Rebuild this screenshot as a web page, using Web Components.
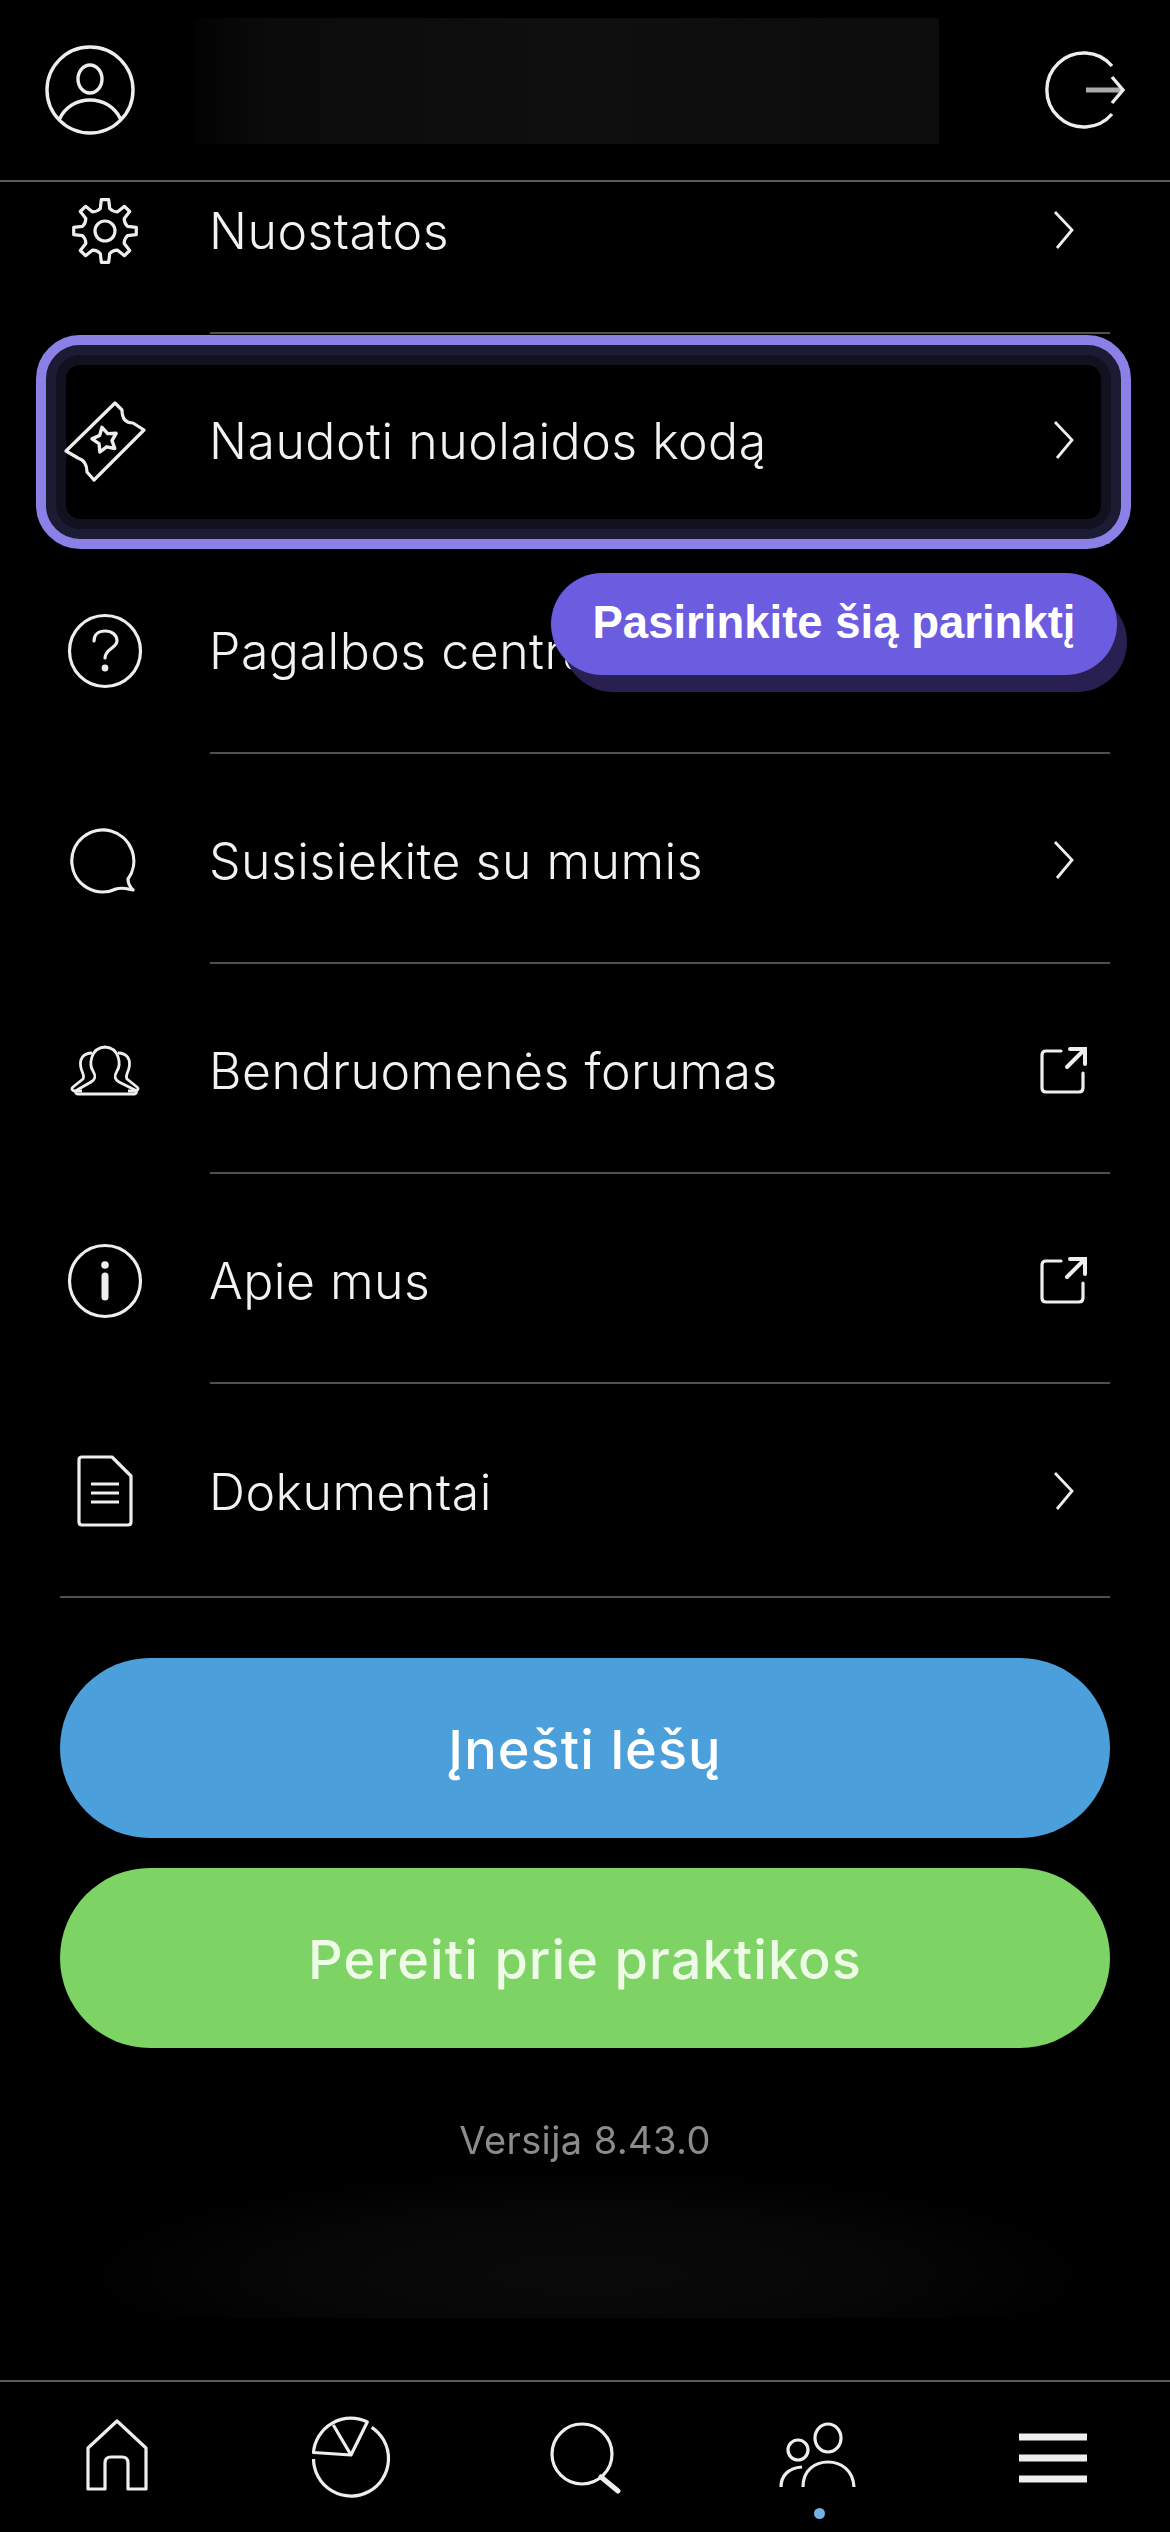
<!DOCTYPE html>
<html lang="lt">
<head>
<meta charset="utf-8">
<title>Meniu</title>
<style>
  html, body { margin: 0; background: #000; }
  body { width: 1170px; height: 2532px; overflow: hidden; font-family: Inter, "Liberation Sans", sans-serif; }
  app-screen { height: 2532px; }
</style>
</head>
<body>
<app-screen>
  <top-bar slot="top"></top-bar>
  <menu-row icon="gear">Nuostatos</menu-row>
  <menu-row icon="ticket" highlighted>Naudoti nuolaidos kodą</menu-row>
  <menu-row icon="help">Pagalbos centras</menu-row>
  <menu-row icon="chat">Susisiekite su mumis</menu-row>
  <menu-row icon="community" trailing="external">Bendruomenės forumas</menu-row>
  <menu-row icon="info" trailing="external">Apie mus</menu-row>
  <menu-row icon="doc" last>Dokumentai</menu-row>
  <hint-bubble slot="overlay">Pasirinkite šią parinktį</hint-bubble>
  <menu-footer slot="footer"></menu-footer>
  <bottom-nav slot="nav"></bottom-nav>
</app-screen>

<script>
// gear outline, teeth around a circle
function gearPath(cx, cy, outer, inner, teeth) {
  let d = "";
  const step = (Math.PI * 2) / teeth;
  for (let i = 0; i < teeth; i++) {
    const a = i * step - Math.PI / 2;
    const pt = (r, o) => {
      const x = cx + r * Math.cos(a + o * step);
      const y = cy + r * Math.sin(a + o * step);
      return x.toFixed(1) + " " + y.toFixed(1);
    };
    d += (i === 0 ? "M" : "L") + pt(inner, -0.26);
    d += "L" + pt(outer, -0.15) + "L" + pt(outer, 0.15) + "L" + pt(inner, 0.26);
    d += "Q" + pt(inner * 0.9, 0.5) + " " + pt(inner, 0.74);
  }
  return d + "Z";
}

function starPath(cx, cy, outer, inner, rot) {
  let d = "";
  for (let i = 0; i < 10; i++) {
    const r = i % 2 ? inner : outer;
    const a = rot + (i * Math.PI) / 5;
    d += (i ? "L" : "M") + (cx + r * Math.cos(a)).toFixed(1) + " " + (cy + r * Math.sin(a)).toFixed(1);
  }
  return d + "Z";
}

const ICONS = {
  gear: `<svg width="70" height="68" viewBox="0 0 70 68"><path d="${gearPath(35, 34, 31.5, 23, 8)}" stroke-linejoin="round"/><circle cx="35" cy="34" r="10"/></svg>`,
  ticket: `<svg width="82" height="82" viewBox="0 0 82 82"><path d="M51 3 L58 10 C58 19 62 23 69 23 L80 30 L30 80 L23 72 C23 64 20 60 14 58 L2 51 Z" stroke-linejoin="round"/><path d="${starPath(41, 40, 13, 7, -1.8)}" stroke-width="3.4" stroke-linejoin="round"/></svg>`,
  help: `<svg width="76" height="76" viewBox="0 0 76 76"><circle cx="38" cy="38" r="35.5"/><path d="M27 28 C27 21 32 18 38 18 C45 18 50 22 50 28 C50 35 38 36 38 45" stroke-linecap="round"/><circle class="fill" cx="38" cy="55" r="3.4"/></svg>`,
  chat: `<svg width="70" height="68" viewBox="0 0 70 68"><path d="M46 62 A31 31 0 1 1 58 52 C58 56 60 60 63 63 C58 62 52 60 46 62 Z" stroke-linejoin="round"/></svg>`,
  community: `<svg width="70" height="54" viewBox="0 0 70 54"><path d="M21 50 L64 50 C67 50 67 47 65 46 L49 38 C44 35 44 32 47 27 C51 21 50 4 35 3 C20 4 19 21 23 27 C26 32 26 35 21 38 L7 46 C5 47 5 50 8 50 L21 50" stroke-linejoin="round" stroke-width="2.8"/><path d="M22 9 C13 9 9 15 11 24 C12 29 15 31 13 35 L3 43 C1 45 2 47 6 47 L12 47 M48 9 C57 9 61 15 59 24 C58 29 55 31 57 35 L67 43 C69 45 68 47 64 47 L58 47" stroke-linejoin="round" stroke-width="2.8"/></svg>`,
  info: `<svg width="76" height="76" viewBox="0 0 76 76"><circle cx="38" cy="38" r="35.5"/><circle class="fill" cx="38" cy="22" r="3.8"/><path d="M38 33 L38 54" stroke-width="7" stroke-linecap="round"/></svg>`,
  doc: `<svg width="58" height="74" viewBox="0 0 58 74"><path d="M6 3 L36 3 L55 22 L55 68 Q55 71 52 71 L6 71 Q3 71 3 68 L3 6 Q3 3 6 3 Z" stroke-linejoin="round"/><path d="M15 30 L43 30 M15 39 L43 39 M15 48 L43 48"/></svg>`,
  chevron: `<svg width="24" height="40" viewBox="0 0 24 40"><path d="M3 2 L20 20 L5 38" stroke-width="2.8"/></svg>`,
  external: `<svg width="50" height="50" viewBox="0 0 50 50"><path d="M22 6 L7 6 Q3 6 3 10 L3 43 Q3 47 7 47 L40 47 Q44 47 44 43 L44 28" stroke-linecap="round"/><path d="M28 22 L46 4 M31 4 L46 4 L46 19" stroke-linecap="round" stroke-width="4"/></svg>`,
};

class AppScreen extends HTMLElement {
  constructor() {
    super();
    this.attachShadow({ mode: "open" });
    this.shadowRoot.innerHTML = `
      <style>
        :host { display: flex; flex-direction: column; width: 1170px; background: #000; overflow: hidden; }
        .top { position: relative; z-index: 2; background: #000; }
        /* the list is scrolled a little, first row runs under the header */
        .list { position: relative; z-index: 1; margin-top: -58px; display: flex; flex-direction: column; }
        .nav { margin-top: auto; }
      </style>
      <div class="top"><slot name="top"></slot></div>
      <div class="list"><slot></slot><slot name="overlay"></slot></div>
      <slot name="footer"></slot>
      <div class="nav"><slot name="nav"></slot></div>
    `;
  }
}

class TopBar extends HTMLElement {
  constructor() {
    super();
    this.attachShadow({ mode: "open" });
    this.shadowRoot.innerHTML = `
      <style>
        :host { display: flex; align-items: center; height: 180px; padding: 0 42px 0 45px; border-bottom: 2px solid #5a5a5a; }
        svg { fill: none; stroke: #eee; stroke-width: 3.4; display: block; flex: none; filter: blur(.5px); }
        .blurred {
          width: 744px; height: 126px; margin: -18px 0 0 60px; flex: none;
          background: linear-gradient(90deg, #030303, #0b0b0b 10%, #0f0f0f 50%, #0c0c0c 100%);
        }
        .logout { margin-left: auto; }
      </style>
      <svg width="90" height="90" viewBox="0 0 90 90">
        <circle cx="45" cy="45" r="43"/>
        <ellipse cx="45" cy="34" rx="12" ry="14"/>
        <path d="M14 75 C20 61 33 55 45 55 C57 55 70 61 76 75"/>
      </svg>
      <div class="blurred"></div>
      <svg class="logout" width="88" height="80" viewBox="0 0 88 80">
        <path d="M72 16 A37 37 0 1 0 72 64"/>
        <path d="M46 40 L82 40" stroke="#aaa" stroke-width="5"/>
        <path d="M72 27 L83 40 L72 53"/>
      </svg>
    `;
  }
}

class MenuRow extends HTMLElement {
  constructor() {
    super();
    this.attachShadow({ mode: "open" });
  }

  connectedCallback() {
    const icon = ICONS[this.getAttribute("icon")] || "";
    const trailing = ICONS[this.getAttribute("trailing") || "chevron"];
    this.shadowRoot.innerHTML = `
      <style>
        :host { display: flex; position: relative; height: 210px; box-sizing: border-box; padding: 0 60px; }
        svg { fill: none; stroke: #eee; stroke-width: 3.2; display: block; filter: blur(.5px); }
        svg .fill { fill: #eee; stroke: none; }
        .icon { position: relative; z-index: 2; width: 90px; flex: none; margin-right: 60px; display: flex; align-items: center; justify-content: center; padding-top: 4px; }
        .body { flex: 1; display: flex; align-items: center; padding-top: 4px; border-bottom: 2px solid #505050; }
        :host([last]) .body { border-bottom: none; }
        .label {
          position: relative; z-index: 2; flex: 1; margin: 2px 0 0 -1px;
          font: 300 50px/58px Inter, "Liberation Sans", sans-serif; letter-spacing: .5px;
          color: #f2f2f2; white-space: nowrap; filter: blur(.4px);
        }
        .trail { position: relative; z-index: 2; width: 92px; flex: none; display: flex; justify-content: center; }
        .ring {
          display: none; position: absolute; z-index: 1; left: 36px; top: 1px; width: 1095px; height: 214px;
          box-sizing: border-box; border-radius: 44px; background: #000; border: 10px solid #8b80e6;
          box-shadow: inset 0 0 0 10px #1c1b34, inset 0 0 0 20px #12111f;
        }
        :host([highlighted]) .ring { display: block; }
      </style>
      <div class="ring"></div>
      <div class="icon">${icon}</div>
      <div class="body">
        <span class="label"><slot></slot></span>
        <span class="trail">${trailing}</span>
      </div>
    `;
  }
}

class HintBubble extends HTMLElement {
  constructor() {
    super();
    this.attachShadow({ mode: "open" });
    this.shadowRoot.innerHTML = `
      <style>
        :host {
          position: absolute; z-index: 3; left: 551px; top: 449px; width: 566px; height: 102px;
          box-sizing: border-box; padding-bottom: 3px;
          display: flex; align-items: center; justify-content: center;
          background: #6c5ce0; border-radius: 51px; box-shadow: 11px 18px 0 -1px #272050;
          font: 700 45.5px "Liberation Sans", Arial, sans-serif; color: #fff; white-space: nowrap;
        }
      </style>
      <slot></slot>
    `;
  }
}

class MenuFooter extends HTMLElement {
  constructor() {
    super();
    this.attachShadow({ mode: "open" });
    this.shadowRoot.innerHTML = `
      <style>
        :host { display: flex; flex-direction: column; margin: 2px 60px 0; padding-top: 60px; border-top: 2px solid #505050; }
        .btn {
          height: 180px; border-radius: 90px; display: flex; align-items: center; justify-content: center;
          font: 500 54px Inter, "Liberation Sans", sans-serif; letter-spacing: 1.1px; color: #fff;
        }
        .btn span { filter: blur(.4px); margin-top: 3px; }
        .deposit { background: #4ba0dc; }
        .practice { background: #7dd364; color: #eefbe6; margin-top: 30px; }
        .version {
          margin-top: 70px; text-align: center; font: 400 38px/44px Inter, "Liberation Sans", sans-serif;
          letter-spacing: .4px; color: #8c8c8c; filter: blur(.4px);
        }
        .blurred {
          margin: 8px 17px 0 22px; height: 148px;
          background: radial-gradient(ellipse farthest-side at 50% 70%, #0a0a0a 0%, #070707 55%, #000 100%);
        }
      </style>
      <div class="btn deposit"><span>Įnešti lėšų</span></div>
      <div class="btn practice"><span>Pereiti prie praktikos</span></div>
      <div class="version">Versija 8.43.0</div>
      <div class="blurred"></div>
    `;
  }
}

class BottomNav extends HTMLElement {
  constructor() {
    super();
    this.attachShadow({ mode: "open" });
    this.shadowRoot.innerHTML = `
      <style>
        :host { display: block; height: 150px; border-top: 2px solid #5a5a5a; position: relative; }
        .items { display: grid; grid-template-columns: 234px 234px 234px 234px 234px; height: 100%; }
        .item { display: flex; flex-direction: column; align-items: center; padding-top: 36px; box-sizing: border-box; }
        svg { fill: none; stroke: #eee; stroke-width: 3.2; display: block; overflow: visible; filter: blur(.5px); }
        .dot { width: 11px; height: 11px; border-radius: 50%; background: #6fb3e8; margin-top: 18px; filter: blur(.6px); }
      </style>
      <div class="items">
        <div class="item">
          <svg width="64" height="74" viewBox="0 0 64 74">
            <path d="M32 3 L61 30 L61 71 L43 71 L43 45 Q43 39 37 39 L26 39 Q20 39 20 45 L20 71 L3 71 L3 30 Z" stroke-linejoin="round"/>
          </svg>
        </div>
        <div class="item">
          <svg width="80" height="80" viewBox="0 0 80 80">
            <path d="M60.7 9.3 A37.5 37.5 0 1 1 2.5 41"/>
            <path d="M40 37 L2.5 34.5 A37.5 37.5 0 0 1 56.3 4 Z M22.3 7 L40 37" stroke-linejoin="round"/>
          </svg>
        </div>
        <div class="item">
          <svg width="72" height="76" viewBox="0 0 72 76">
            <circle cx="33" cy="36" r="30"/>
            <path d="M52 59 L69 73" stroke-width="5" stroke-linecap="round"/>
          </svg>
        </div>
        <div class="item">
          <svg width="78" height="72" viewBox="0 0 78 72">
            <ellipse cx="48" cy="20" rx="13" ry="14"/>
            <circle cx="18" cy="32" r="10"/>
            <path d="M23 69 C23 52 35 44 48 44 C61 44 73 52 74 69"/>
            <path d="M1 69 C1 58 8 50 22 49"/>
          </svg>
          <span class="dot"></span>
        </div>
        <div class="item">
          <svg width="68" height="70" viewBox="0 0 68 70" style="stroke-width:7">
            <path d="M0 19 L68 19 M0 40 L68 40 M0 61 L68 61"/>
          </svg>
        </div>
      </div>
    `;
  }
}

customElements.define("app-screen", AppScreen);
customElements.define("top-bar", TopBar);
customElements.define("menu-row", MenuRow);
customElements.define("hint-bubble", HintBubble);
customElements.define("menu-footer", MenuFooter);
customElements.define("bottom-nav", BottomNav);
</script>
</body>
</html>
